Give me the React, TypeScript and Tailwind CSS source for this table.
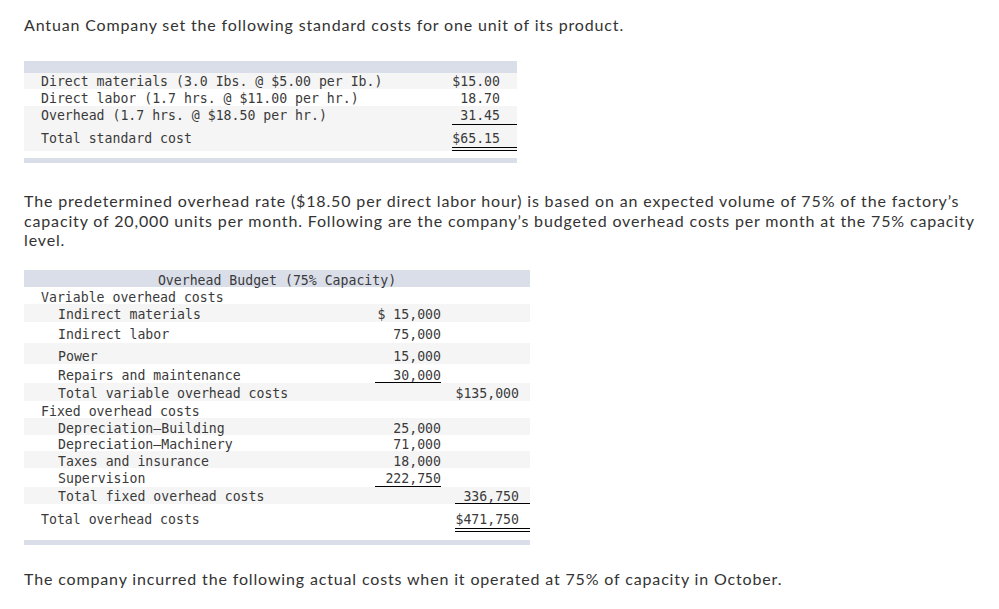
const sans = "font-['Lato','Open_Sans','Liberation_Sans',sans-serif]";
const mono = "font-['DejaVu_Sans_Mono','Liberation_Mono',monospace]";

type CostRow = {
  label: string;
  indent: number;
  v1?: string;
  v2?: string;
  u1?: boolean;
  u2?: "single" | "double";
  h: string;
  pt: string;
  shade: boolean;
};

const budgetRows: CostRow[] = [
  { label: "Variable overhead costs", indent: 0, h: "h-[17px]", pt: "pt-[3px]", shade: false },
  { label: "Indirect materials", indent: 1, v1: "$ 15,000", h: "h-[18px]", pt: "pt-[3px]", shade: true },
  { label: "Indirect labor", indent: 1, v1: "75,000", h: "h-[21px]", pt: "pt-[5px]", shade: false },
  { label: "Power", indent: 1, v1: "15,000", h: "h-[21px]", pt: "pt-[6px]", shade: true },
  { label: "Repairs and maintenance", indent: 1, v1: "30,000", u1: true, h: "h-[19px]", pt: "pt-[4px]", shade: false },
  { label: "Total variable overhead costs", indent: 1, v2: "$135,000", h: "h-[18px]", pt: "pt-[3px]", shade: true },
  { label: "Fixed overhead costs", indent: 0, h: "h-[17px]", pt: "pt-[3px]", shade: false },
  { label: "Depreciation\u2014Building", indent: 1, v1: "25,000", h: "h-[17px]", pt: "pt-[3px]", shade: true },
  { label: "Depreciation\u2014Machinery", indent: 1, v1: "71,000", h: "h-[16px]", pt: "pt-[2px]", shade: false },
  { label: "Taxes and insurance", indent: 1, v1: "18,000", h: "h-[17px]", pt: "pt-[3px]", shade: true },
  { label: "Supervision", indent: 1, v1: "222,750", u1: true, h: "h-[19px]", pt: "pt-[3px]", shade: false },
  { label: "Total fixed overhead costs", indent: 1, v2: "336,750", u2: "single", h: "h-[17px]", pt: "pt-[2px]", shade: true },
  { label: "Total overhead costs", indent: 0, v2: "$471,750", u2: "double", h: "h-[28px]", pt: "pt-[8px]", shade: false },
];

function BudgetRow({ row }: { row: CostRow }) {
  return (
    <div className={`flex ${row.h} ${row.shade ? "bg-[#f5f5f5]" : "bg-white"}`}>
      <div className={`flex-1 ${row.pt} ${row.indent ? "pl-[34px]" : "pl-[17px]"}`}>{row.label}</div>
      <div className={`w-[66px] text-right ${row.pt} ${row.u1 ? "border-b border-black" : ""}`}>{row.v1}</div>
      <div className="w-[14px]" />
      <div
        className={`w-[75px] pr-[11px] text-right ${row.pt} ${
          row.u2 === "single" ? "border-b border-black" : row.u2 === "double" ? "border-b-4 border-double border-black" : ""
        }`}
      >
        {row.v2}
      </div>
    </div>
  );
}

export default function App() {
  return (
    <div className={`min-h-[609px] w-[999px] bg-white px-[24px] text-[#333] ${sans}`}>
      <p className="pt-[15px] text-[16px] leading-[20px] tracking-[0.85px]">
        Antuan Company set the following standard costs for one unit of its product.
      </p>

      <div className={`mt-[26px] w-[493px] text-[13.2px] leading-[15px] text-[#3a3a3a] ${mono}`}>
        <div className="h-[12px] bg-[#dadee9]" />
        <div className="flex h-[16px] bg-[#f5f5f5] pt-[1px]">
          <div className="flex-1 pl-[17px]">Direct materials (3.0 Ibs. @ $5.00 per Ib.)</div>
          <div className="w-[65px] pr-[17px] text-right">$15.00</div>
        </div>
        <div className="flex h-[17px] bg-white pt-[2px]">
          <div className="flex-1 pl-[17px]">Direct labor (1.7 hrs. @ $11.00 per hr.)</div>
          <div className="w-[65px] pr-[17px] text-right">18.70</div>
        </div>
        <div className="flex h-[19px] bg-[#f5f5f5]">
          <div className="flex-1 pl-[17px] pt-[2px]">Overhead (1.7 hrs. @ $18.50 per hr.)</div>
          <div className="w-[65px] border-b border-black pr-[17px] pt-[2px] text-right">31.45</div>
        </div>
        <div className="flex h-[26px] bg-[#f5f5f5]">
          <div className="flex-1 pl-[17px] pt-[6px]">Total standard cost</div>
          <div className="w-[65px] border-b-4 border-double border-black pr-[17px] pt-[6px] text-right">$65.15</div>
        </div>
        <div className="h-[7px]" />
        <div className="h-[5px] bg-[#dadee9]" />
      </div>

      <p className="mt-[28px] text-[16px] leading-[19.5px] tracking-[0.85px]">
        <span className="block whitespace-nowrap">
          The predetermined overhead rate ($18.50 per direct labor hour) is based on an expected volume of 75% of the factory’s
        </span>
        <span className="block whitespace-nowrap">
          capacity of 20,000 units per month. Following are the company’s budgeted overhead costs per month at the 75% capacity
        </span>
        <span className="block whitespace-nowrap">level.</span>
      </p>

      <div className={`mt-[20px] w-[506px] text-[13.2px] leading-[15px] text-[#3a3a3a] ${mono}`}>
        <div className="h-[17px] bg-[#dadee9] pt-[3px] text-center">Overhead Budget (75% Capacity)</div>
        {budgetRows.map((row) => (
          <BudgetRow key={row.label} row={row} />
        ))}
        <div className="h-[8px]" />
        <div className="h-[5px] bg-[#dadee9]" />
      </div>

      <p className="mt-[24px] text-[16px] leading-[20px] tracking-[0.85px]">
        The company incurred the following actual costs when it operated at 75% of capacity in October.
      </p>
    </div>
  );
}
